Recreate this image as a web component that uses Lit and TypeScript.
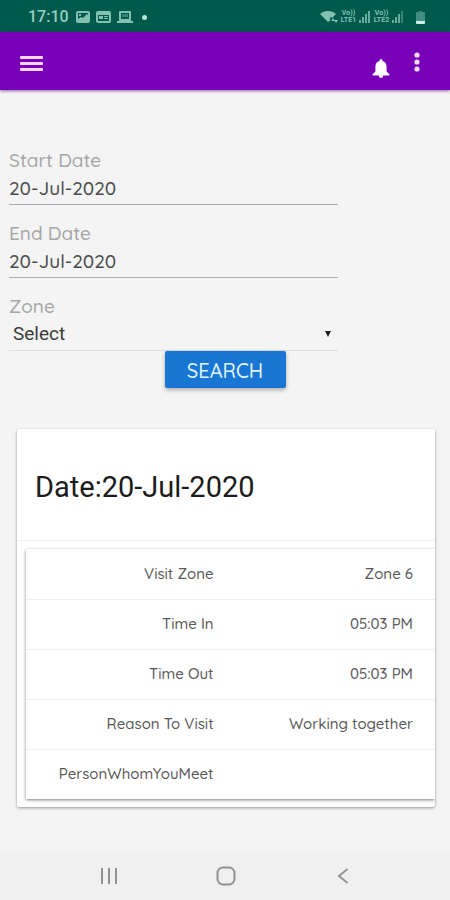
import { LitElement, html, css, svg } from "lit";
import { customElement, state } from "lit/decorators.js";

interface VisitField {
  label: string;
  value: string;
}

const signalBars = (bright: boolean) => html`
  <svg class="signal" width="12" height="12" viewBox="0 0 12 12" aria-hidden="true">
    ${[0, 1, 2, 3].map(
      (i) => svg`<rect x=${i * 3} y=${9 - i * 3} width="2" height=${3 + i * 3}
        opacity=${bright && i === 3 ? 0.4 : 0.8} />`
    )}
  </svg>
`;

@customElement("status-bar")
export class StatusBar extends LitElement {
  static styles = css`
    :host {
      display: flex;
      align-items: center;
      justify-content: space-between;
      height: 32px;
      padding: 0 25px 0 28px;
      background: #005a4c;
      color: #82c0b2;
      font-family: Roboto, "Liberation Sans", sans-serif;
    }
    .group {
      display: flex;
      align-items: center;
      gap: 6px;
      padding-top: 2px;
    }
    .right {
      gap: 2px;
    }
    .time {
      font-size: 16px;
      line-height: 20px;
      font-weight: 500;
      color: #96cec2;
      margin-right: 1px;
    }
    svg {
      display: block;
      fill: currentColor;
    }
    .dot {
      width: 5px;
      height: 5px;
      border-radius: 50%;
      background: #b2e6da;
      margin-left: 3px;
    }
    .volte {
      display: grid;
      justify-items: center;
      width: 17px;
      font-size: 7px;
      line-height: 7px;
      font-weight: 700;
    }
    .battery {
      margin-left: 10px;
    }
  `;

  render() {
    return html`
      <div class="group">
        <span class="time">17:10</span>
        <svg width="14" height="12" viewBox="0 0 14 12" aria-hidden="true">
          <path fill-rule="evenodd" d="M2 0h10a2 2 0 0 1 2 2v8a2 2 0 0 1-2 2H2a2 2 0 0 1-2-2V2a2 2 0 0 1 2-2zM2 2v6l3-2 2 1 4-4 1 1V2zM3 3h2v2H3z" />
        </svg>
        <svg width="15" height="12" viewBox="0 0 15 12" aria-hidden="true">
          <path fill-rule="evenodd" d="M2 0h11a2 2 0 0 1 2 2v8a2 2 0 0 1-2 2H2a2 2 0 0 1-2-2V2a2 2 0 0 1 2-2zM2 4v6h11V4zM3 5h4v3H3zM8 5h4v1H8zM8 7h4v1H8z" />
        </svg>
        <svg width="16" height="12" viewBox="0 0 16 12" aria-hidden="true">
          <path fill-rule="evenodd" d="M3 0h10a1 1 0 0 1 1 1v9h2v2H0v-2h2V1a1 1 0 0 1 1-1zM4 2v6h8V2z" />
          <path opacity="0.4" d="M5 3h6v3H5z" />
        </svg>
        <span class="dot"></span>
      </div>
      <div class="group right">
        <svg width="18" height="14" viewBox="0 0 18 14" aria-hidden="true">
          <path d="M0 4C4 0 12 0 16 4l-3.400 3.600h-2.600v3L8 12z" />
          <path d="M11 11l2-3 2 3zM14 10h4l-2 3z" />
        </svg>
        <span class="volte"><span>Vo))</span><span>LTE1</span></span>
        ${signalBars(false)}
        <span class="volte"><span>Vo))</span><span>LTE2</span></span>
        ${signalBars(true)}
        <svg class="battery" width="9" height="13" viewBox="0 0 9 13" aria-hidden="true">
          <path opacity="0.5" d="M3 0h3v1h2a1 1 0 0 1 1 1v8H0V2a1 1 0 0 1 1-1h2z" />
          <path fill="#c8f0e6" d="M0 10h9v2a1 1 0 0 1-1 1H1a1 1 0 0 1-1-1z" />
        </svg>
      </div>
    `;
  }
}

@customElement("app-header")
export class AppHeader extends LitElement {
  static styles = css`
    :host {
      display: flex;
      align-items: center;
      justify-content: space-between;
      box-sizing: border-box;
      height: 58px;
      padding: 4px 20px 0;
      background: #7800b8;
      box-shadow: 0 1px 3px rgba(70, 0, 110, 0.6);
    }
    button {
      display: block;
      padding: 0;
      border: 0;
      background: none;
      cursor: pointer;
    }
    svg {
      display: block;
      fill: #fff;
    }
    .menu svg {
      fill: #fbd5ff;
    }
    .actions {
      display: flex;
      align-items: flex-end;
      gap: 24px;
      padding-top: 4px;
    }
    .more {
      padding: 0 10px 6px 0;
    }
    .more svg {
      fill: #f6ddff;
    }
  `;

  render() {
    return html`
      <button class="menu" aria-label="Open menu">
        <svg width="23" height="16" viewBox="0 0 23 16">
          <rect y="1" width="23" height="3" rx="1" />
          <rect y="7" width="23" height="3" rx="1" />
          <rect y="13" width="23" height="3" rx="1" />
        </svg>
      </button>
      <div class="actions">
        <button aria-label="Notifications">
          <svg width="18" height="19" viewBox="0 0 18 19">
            <path d="M9 0a1.500 1.500 0 0 1 1.500 1.500v.6C13.200 2.800 14.600 5 14.600 8v4.500l2.800 2.700a.7.7 0 0 1-.5 1.200H1.100a.7.7 0 0 1-.5-1.200l2.800-2.700V8c0-3 1.400-5.200 4.100-5.900v-.6A1.500 1.500 0 0 1 9 0zM7 16h4v1a2 2 0 0 1-4 0z" />
          </svg>
        </button>
        <button class="more" aria-label="More options">
          <svg width="6" height="20" viewBox="0 0 6 20">
            <circle cx="3" cy="3" r="2.600" />
            <circle cx="3" cy="10" r="2.600" />
            <circle cx="3" cy="17" r="2.600" />
          </svg>
        </button>
      </div>
    `;
  }
}

@customElement("visit-search")
export class VisitSearch extends LitElement {
  static styles = css`
    :host {
      display: flex;
      flex-direction: column;
      font-family: Quicksand, Inter, "Liberation Sans", sans-serif;
      font-weight: 500;
    }
    form {
      display: flex;
      flex-direction: column;
    }
    .field {
      display: flex;
      flex-direction: column;
      width: 73%;
      margin: 0 0 16px 9px;
    }
    .zone {
      margin-bottom: 0;
    }
    label {
      font-size: 19px;
      line-height: 24px;
      color: #a6a6a6;
    }
    input,
    select {
      box-sizing: border-box;
      width: 100%;
      height: 33px;
      margin: 0;
      padding: 0;
      border: 0;
      border-bottom: 1px solid #acacac;
      border-radius: 0;
      background: transparent;
      color: #4c4c4c;
      font: inherit;
      font-size: 19px;
      outline: none;
    }
    .picker {
      display: grid;
      align-items: center;
    }
    .picker > * {
      grid-area: 1 / 1;
    }
    select {
      appearance: none;
      height: 33px;
      padding: 0 24px 2px 4px;
      border-color: #dcdcdc;
      color: #3c3c3c;
      font-family: Roboto, "Liberation Sans", sans-serif;
      font-weight: 400;
    }
    .arrow {
      justify-self: end;
      margin: 0 7px 2px 0;
      fill: #222;
      pointer-events: none;
    }
    .submit {
      align-self: center;
      width: 121px;
      height: 37px;
      padding: 3px 0 0;
      border: 0;
      border-radius: 2px;
      background: #1976d2;
      box-shadow: 0 2px 4px rgba(0, 0, 0, 0.3);
      color: #dff6ff;
      font: inherit;
      font-size: 20px;
      line-height: 24px;
      cursor: pointer;
    }
  `;

  @state() private start = "20-Jul-2020";
  @state() private end = "20-Jul-2020";

  render() {
    return html`
      <form @submit=${(e: Event) => e.preventDefault()}>
        <div class="field">
          <label for="start">Start Date</label>
          <input id="start" type="text" .value=${this.start} />
        </div>
        <div class="field">
          <label for="end">End Date</label>
          <input id="end" type="text" .value=${this.end} />
        </div>
        <div class="field zone">
          <label for="zone">Zone</label>
          <div class="picker">
            <select id="zone">
              <option>Select</option>
            </select>
            <svg class="arrow" width="6" height="6" viewBox="0 0 6 6" aria-hidden="true">
              <path d="M0 0h6L3 6z" />
            </svg>
          </div>
        </div>
        <button class="submit" type="submit">SEARCH</button>
      </form>
    `;
  }
}

@customElement("visit-card")
export class VisitCard extends LitElement {
  static styles = css`
    :host {
      display: block;
      overflow: hidden;
      border-radius: 2px;
      background: #fff;
      box-shadow: 0 1px 3px rgba(0, 0, 0, 0.4);
    }
    h2 {
      margin: 0;
      padding: 40px 18px 35px;
      border-bottom: 1px solid #f0f0f0;
      color: #1c1c1c;
      font: 400 29px/36px Roboto, "Liberation Sans", sans-serif;
    }
    .details {
      margin: 8px 0 8px 9px;
      box-shadow: 0 1px 3px rgba(0, 0, 0, 0.5);
    }
    table {
      width: 100%;
      border-collapse: collapse;
      table-layout: fixed;
      color: #585858;
      font: 500 15px/20px Quicksand, Inter, "Liberation Sans", sans-serif;
    }
    th,
    td {
      box-sizing: border-box;
      height: 50px;
      padding: 0 22px 0 0;
      font-weight: 500;
      text-align: right;
      white-space: nowrap;
    }
    th {
      width: 51%;
      padding-right: 21px;
    }
    tr + tr {
      border-top: 1px solid #f0f0f0;
    }
  `;

  @state() private fields: VisitField[] = [
    { label: "Visit Zone", value: "Zone 6" },
    { label: "Time In", value: "05:03 PM" },
    { label: "Time Out", value: "05:03 PM" },
    { label: "Reason To Visit", value: "Working together" },
    { label: "PersonWhomYouMeet", value: "" },
  ];

  render() {
    return html`
      <h2>Date:20-Jul-2020</h2>
      <div class="details">
        <table>
          <tbody>
            ${this.fields.map(
              (f) => html`<tr><th scope="row">${f.label}</th><td>${f.value}</td></tr>`
            )}
          </tbody>
        </table>
      </div>
    `;
  }
}

@customElement("system-nav")
export class SystemNav extends LitElement {
  static styles = css`
    :host {
      display: grid;
      grid-template-columns: repeat(3, 26%);
      justify-content: center;
      height: 47px;
      background: #f0f0f0;
    }
    button {
      display: grid;
      place-items: center;
      padding: 0 0 2px 2px;
      border: 0;
      background: none;
    }
    svg {
      fill: none;
      stroke: #929292;
      stroke-width: 2;
    }
  `;

  render() {
    return html`
      <button aria-label="Recent apps">
        <svg width="18" height="18" viewBox="0 0 18 18"><path d="M2 1v16M9 1v16M16 1v16" /></svg>
      </button>
      <button aria-label="Home">
        <svg width="20" height="20" viewBox="0 0 20 20"><rect x="1.500" y="1.500" width="17" height="17" rx="5.500" /></svg>
      </button>
      <button aria-label="Back">
        <svg width="12" height="18" viewBox="0 0 12 18"><path d="M10.500 2L2 9l8.500 7" /></svg>
      </button>
    `;
  }
}

@customElement("app-root")
export class AppRoot extends LitElement {
  static styles = css`
    :host {
      display: flex;
      flex-direction: column;
      min-height: 100vh;
      background: #f4f4f4;
    }
    main {
      display: flex;
      flex: 1;
      flex-direction: column;
      gap: 41px;
      padding: 58px 0 24px;
    }
    visit-card {
      margin: 0 15px 0 17px;
    }
  `;

  render() {
    return html`
      <status-bar></status-bar>
      <app-header></app-header>
      <main>
        <visit-search></visit-search>
        <visit-card></visit-card>
      </main>
      <system-nav></system-nav>
    `;
  }
}
